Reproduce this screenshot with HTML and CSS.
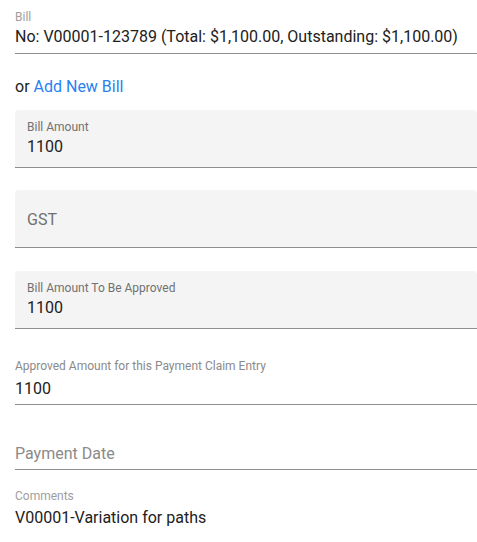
FILE: index.html
```html
<!DOCTYPE html>
<html lang="en">
<head>
<meta charset="utf-8">
<title>Bill entry</title>
<link rel="stylesheet" href="styles.css">
</head>
<body>
<form class="form">
  <div class="field field-select">
    <div class="label label-light">Bill</div>
    <div class="value">No: V00001-123789 (Total: $1,100.00, Outstanding: $1,100.00)</div>
  </div>

  <div class="alt-link">or <a href="#" class="link">Add New Bill</a></div>

  <div class="filled">
    <div class="label label-filled">Bill Amount</div>
    <div class="value">1100</div>
  </div>

  <div class="filled filled-empty">
    <div class="placeholder placeholder-filled">GST</div>
  </div>

  <div class="filled filled-last">
    <div class="label label-filled">Bill Amount To Be Approved</div>
    <div class="value">1100</div>
  </div>

  <div class="field field-approved">
    <div class="label label-std">Approved Amount for this Payment Claim Entry</div>
    <div class="value">1100</div>
  </div>

  <div class="field field-empty">
    <div class="placeholder placeholder-std">Payment Date</div>
  </div>

  <div class="comments">
    <div class="label label-light">Comments</div>
    <div class="value value-comment">V00001-Variation for paths</div>
  </div>
</form>
</body>
</html>
```

FILE: styles.css
```css
* { box-sizing: border-box; }

html, body {
  margin: 0;
  padding: 0;
  background: #ffffff;
}

body {
  font-family: Roboto, "Liberation Sans", Arial, sans-serif;
  color: #212121;
  overflow: hidden;
}

.form {
  padding: 10px 0 0 15px;
  margin: 0;
}

.label {
  font-size: 12px;
  line-height: 14px;
  white-space: nowrap;
}

.label-light { color: #9e9e9e; }
.label-filled { color: #717171; }
.label-std { color: #8a8a8a; }

.value {
  font-size: 16px;
  line-height: 19px;
  color: #212121;
  white-space: nowrap;
}

.placeholder {
  font-size: 16px;
  line-height: 19px;
  white-space: nowrap;
}

.placeholder-filled { color: #707070; }
.placeholder-std { color: #8a8a8a; }

.field {
  border-bottom: 1px solid #8e8e8e;
}

.field-select .value {
  margin-top: 3px;
  padding-bottom: 7px;
}

.alt-link {
  margin-top: 23px;
  font-size: 16px;
  line-height: 19px;
  color: #212121;
}

.link {
  color: #2a7ff3;
  text-decoration: none;
}

.filled {
  margin-top: 14px;
  background: #f4f4f4;
  border-radius: 4px 4px 0 0;
  border-bottom: 1px solid #8e8e8e;
  padding: 10px 12px 11px;
}

.filled + .filled {
  margin-top: 22px;
}

.filled + .filled-last {
  margin-top: 23px;
}

.filled .value {
  margin-top: 3px;
}

.filled-empty {
  padding: 20px 12px 18px;
}

.field-approved {
  margin-top: 30px;
  padding-bottom: 6px;
}

.field-approved .value {
  margin-top: 6px;
}

.field-empty {
  margin-top: 39px;
  padding-bottom: 6px;
}

.comments {
  margin-top: 19px;
}

.value-comment {
  margin-top: 5px;
}
```
